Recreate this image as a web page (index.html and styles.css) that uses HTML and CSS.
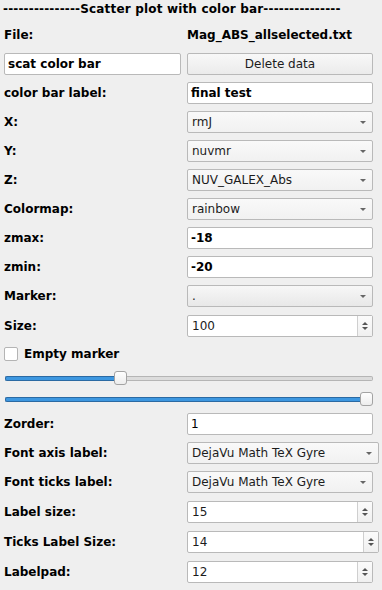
FILE: index.html
```html
<!DOCTYPE html>
<html>
<head>
<meta charset="utf-8">
<link rel="stylesheet" href="styles.css">
</head>
<body>
<div class="panel">
  <div class="title">---------------Scatter plot with color bar---------------</div>

  <div class="row"><span class="lbl">File:</span><span class="val">Mag_ABS_allselected.txt</span></div>

  <div class="row split">
    <div class="edit bold">scat color bar</div>
    <div class="button">Delete data</div>
  </div>

  <div class="row"><span class="lbl">color bar label:</span><div class="edit bold">final test</div></div>
  <div class="row"><span class="lbl">X:</span><div class="combo"><span>rmJ</span><i class="arrow"></i></div></div>
  <div class="row"><span class="lbl">Y:</span><div class="combo"><span>nuvmr</span><i class="arrow"></i></div></div>
  <div class="row"><span class="lbl">Z:</span><div class="combo"><span>NUV_GALEX_Abs</span><i class="arrow"></i></div></div>
  <div class="row"><span class="lbl">Colormap:</span><div class="combo"><span>rainbow</span><i class="arrow"></i></div></div>
  <div class="row"><span class="lbl">zmax:</span><div class="edit bold">-18</div></div>
  <div class="row"><span class="lbl">zmin:</span><div class="edit bold">-20</div></div>
  <div class="row"><span class="lbl">Marker:</span><div class="combo grad"><span>.</span><i class="arrow"></i></div></div>
  <div class="row spinrow"><span class="lbl">Size:</span><div class="spin"><span class="spintext">100</span><span class="spinbtn"><i class="up"></i><i class="down"></i></span></div></div>

  <div class="checkrow"><span class="check"></span><span class="lbl">Empty marker</span></div>

  <div class="slider">
    <span class="fill" style="width:110px"></span><span class="handle"></span><span class="rest"></span>
  </div>
  <div class="slider">
    <span class="fill" style="width:357px"></span><span class="handle"></span>
  </div>

  <div class="row"><span class="lbl">Zorder:</span><div class="edit">1</div></div>
  <div class="row"><span class="lbl">Font axis label:</span><div class="combo wide"><span>DejaVu Math TeX Gyre</span><i class="arrow"></i></div></div>
  <div class="row"><span class="lbl">Font ticks label:</span><div class="combo"><span>DejaVu Math TeX Gyre</span><i class="arrow"></i></div></div>
  <div class="row spinrow"><span class="lbl">Label size:</span><div class="spin"><span class="spintext">15</span><span class="spinbtn"><i class="up"></i><i class="down"></i></span></div></div>
  <div class="row spinrow"><span class="lbl">Ticks Label Size:</span><div class="spin wide"><span class="spintext">14</span><span class="spinbtn"><i class="up"></i><i class="down"></i></span></div></div>
  <div class="row spinrow"><span class="lbl">Labelpad:</span><div class="spin"><span class="spintext">12</span><span class="spinbtn"><i class="up"></i><i class="down"></i></span></div></div>
</div>
</body>
</html>
```

FILE: styles.css
```css
html, body {
  margin: 0;
  padding: 0;
  background: #efefef;
}
body {
  font-family: "DejaVu Sans", sans-serif;
  font-size: 12px;
  color: #000;
  width: 382px;
  height: 590px;
  overflow: hidden;
}
.panel {
  display: flex;
  flex-direction: column;
  gap: 7px;
}
.title {
  height: 15px;
  padding: 2px 0 0 3px;
  font-weight: bold;
  line-height: 14px;
  letter-spacing: 0.17px;
  white-space: nowrap;
}
.row {
  display: grid;
  grid-template-columns: 183px auto;
  align-items: center;
  height: 22px;
  padding-left: 4px;
}
.spinrow {
  margin-top: 1px;
}
.row.split {
  grid-template-columns: 177px 186px;
  column-gap: 6px;
}
.row.split .edit {
  width: 177px;
}
.lbl {
  font-weight: bold;
  white-space: nowrap;
}
.val {
  font-weight: bold;
}
.bold {
  font-weight: bold;
}
.edit, .combo, .spin, .button {
  box-sizing: border-box;
  height: 22px;
  width: 186px;
  border: 1px solid #b9b9b9;
  border-radius: 2px;
  line-height: 20px;
  white-space: nowrap;
}
.edit {
  background: #fff;
  padding-left: 3px;
}
.button {
  background: linear-gradient(#f8f8f8, #ebebeb);
  text-align: center;
  color: #1c1c1c;
}
.combo {
  background: linear-gradient(#f9f9f9, #f1f1f1);
  display: flex;
  align-items: center;
  justify-content: space-between;
  padding: 0 6px 0 4px;
  color: #1c1c1c;
}
.combo.grad {
  background: linear-gradient(#f7f7f7, #e8e8e8);
}
.wide {
  width: 192px;
}
.arrow {
  display: block;
  width: 0;
  height: 0;
  border-left: 3.5px solid transparent;
  border-right: 3.5px solid transparent;
  border-top: 3px solid #666;
}
.spin {
  background: #fff;
  display: flex;
  color: #1c1c1c;
}
.spintext {
  flex: 1;
  padding-left: 4px;
}
.spinbtn {
  width: 14px;
  border-left: 1px solid #cfcfcf;
  display: flex;
  flex-direction: column;
  align-items: center;
  justify-content: center;
  gap: 2px;
  background: linear-gradient(#fbfbfb, #f0f0f0);
}
.up {
  display: block;
  width: 0;
  height: 0;
  border-left: 3.5px solid transparent;
  border-right: 3.5px solid transparent;
  border-bottom: 3.5px solid #555;
}
.down {
  display: block;
  width: 0;
  height: 0;
  border-left: 3.5px solid transparent;
  border-right: 3.5px solid transparent;
  border-top: 3.5px solid #555;
}
.checkrow {
  display: flex;
  align-items: center;
  height: 20px;
  padding-left: 4px;
  gap: 6px;
}
.check {
  box-sizing: border-box;
  width: 14px;
  height: 14px;
  background: #fff;
  border: 1px solid #b4b4b4;
  border-radius: 2px;
}
.slider {
  display: flex;
  align-items: center;
  height: 14px;
  padding-left: 5px;
  width: 368px;
}
.fill {
  box-sizing: border-box;
  height: 5px;
  background: #3d97e0;
  border: 1px solid #2b6aa3;
  border-right: none;
  border-radius: 2px 0 0 2px;
  margin-right: -1px;
}
.rest {
  box-sizing: border-box;
  flex: 1;
  height: 5px;
  background: #dcdcdc;
  border: 1px solid #b5b5b5;
  border-left: none;
  border-radius: 0 2px 2px 0;
  margin-left: -1px;
}
.handle {
  box-sizing: border-box;
  width: 13px;
  height: 14px;
  background: linear-gradient(#fefefe, #ededed);
  border: 1px solid #a3a3a3;
  border-radius: 3px;
  position: relative;
  z-index: 1;
}
```
